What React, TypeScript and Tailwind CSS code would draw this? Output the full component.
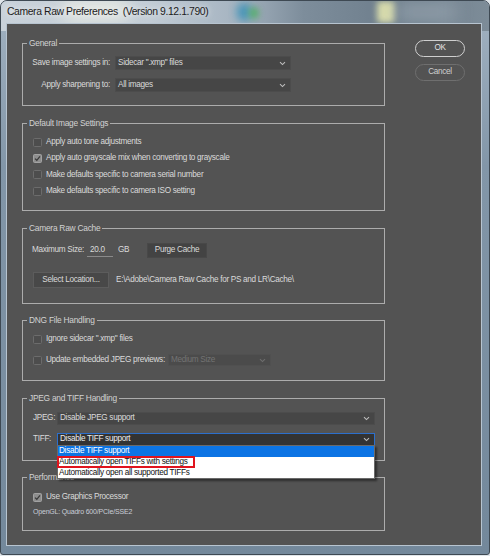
import React from "react";

function Chevron({ dim = false }: { dim?: boolean }) {
  return (
    <svg width="7" height="5" viewBox="0 0 7 5" className="shrink-0">
      <path
        d="M1 1.2 L3.5 3.6 L6 1.2"
        fill="none"
        strokeWidth="1.1"
        className={dim ? "stroke-[#6e6e6e]" : "stroke-[#bdbdbd]"}
      />
    </svg>
  );
}

function Box({ checked = false }: { checked?: boolean }) {
  return checked ? (
    <span className="w-[9px] h-[9px] shrink-0 rounded-[1.5px] border border-[#a2a2a2] bg-[#8e8e8e] flex items-center justify-center">
      <svg width="7" height="7" viewBox="0 0 7 7">
        <path d="M1 3.6 L2.8 5.3 L6 1.4" fill="none" stroke="#3a3a3a" strokeWidth="1.3" />
      </svg>
    </span>
  ) : (
    <span className="w-[9px] h-[9px] shrink-0 rounded-[1.5px] border border-[#6c6c6c] bg-[#4d4d4d]" />
  );
}

function Group({
  title,
  className,
  children,
}: {
  title: string;
  className: string;
  children?: React.ReactNode;
}) {
  return (
    <div className={"relative border border-[#acacac] " + className}>
      <span className="absolute top-[-7.5px] left-[4px] px-[2px] h-[12px] leading-[12px] bg-[#535353] text-[#d2d2d2] text-[8.4px] tracking-[-0.25px]">
        {title}
      </span>
      {children}
    </div>
  );
}

export default function App() {
  return (
    <div className="w-[490px] h-[556px] relative overflow-hidden bg-[#dfe5ea] font-['Liberation_Sans',Arial,sans-serif] whitespace-nowrap">
      <div className="relative w-[490px] h-[555px] flex flex-col rounded-t-[7px] rounded-b-[3px] border border-[#3e4953] bg-[linear-gradient(180deg,#a3b3c2_0%,#8296a8_30%,#73889b_100%)] pl-[5px] pr-[7px] pb-[8px] overflow-hidden">
        {/* aero glass title area */}
        <div className="absolute inset-x-0 top-0 h-[30px] bg-[linear-gradient(90deg,#c9d2da_0%,#c3cdd6_30%,#a6b4c1_48%,#7d8d9b_62%,#6e7e8c_80%,#7d8c98_100%)]" />
        <div className="absolute left-[60px] top-[-4px] w-[70px] h-[26px] rounded-full bg-[#eef0e6] opacity-70 blur-[8px]" />
        <div className="absolute left-[236px] top-[2px] w-[14px] h-[18px] rounded-full bg-[#2f8fb8] opacity-80 blur-[4px]" />
        <div className="absolute left-[248px] top-[6px] w-[10px] h-[12px] rounded-full bg-[#4fb060] opacity-80 blur-[3px]" />
        <div className="absolute left-[376px] top-[0px] w-[18px] h-[22px] rounded-[4px] bg-[#e4e6b0] opacity-90 blur-[3px]" />
        <div className="absolute left-[395px] top-[0px] w-[60px] h-[22px] bg-[#9aa7b2] opacity-60 blur-[8px]" />

        <div className="relative h-[22px] flex items-center pl-[1px] text-[10.4px] tracking-[-0.4px] text-[#1c1c1c] whitespace-pre text-shadow-[0_0_6px_#ffffff]">
          {"Camera Raw Preferences  (Version 9.12.1.790)"}
        </div>

        <div className="relative flex-1 border border-[#b7c4d0] bg-[#535353] flex text-[#dadada] text-[8.2px] tracking-[-0.3px]">
          {/* left column */}
          <div className="ml-[15px] mt-[19px] w-[363px] flex flex-col">
            <Group title="General" className="h-[63px]">
              <div className="pt-[12px] flex flex-col gap-[8px]">
                <div className="flex items-center h-[14px]">
                  <span className="w-[87px] text-right">Save image settings in:</span>
                  <div className="ml-[5px] w-[176px] h-[14px] bg-[#464646] border border-[#4c4c4c] flex items-center justify-between pl-[2px] pr-[4px]">
                    <span>Sidecar ".xmp" files</span>
                    <Chevron />
                  </div>
                </div>
                <div className="flex items-center h-[14px]">
                  <span className="w-[87px] text-right">Apply sharpening to:</span>
                  <div className="ml-[5px] w-[176px] h-[14px] bg-[#464646] border border-[#4c4c4c] flex items-center justify-between pl-[2px] pr-[4px]">
                    <span>All images</span>
                    <Chevron />
                  </div>
                </div>
              </div>
            </Group>

            <Group title="Default Image Settings" className="mt-[17px] h-[88px]">
              <div className="pt-[10px] pl-[10px] flex flex-col">
                <div className="h-[16.33px] flex items-center gap-[4px]">
                  <Box />
                  <span>Apply auto tone adjustments</span>
                </div>
                <div className="h-[16.33px] flex items-center gap-[4px]">
                  <Box checked />
                  <span>Apply auto grayscale mix when converting to grayscale</span>
                </div>
                <div className="h-[16.33px] flex items-center gap-[4px]">
                  <Box />
                  <span>Make defaults specific to camera serial number</span>
                </div>
                <div className="h-[16.33px] flex items-center gap-[4px]">
                  <Box />
                  <span>Make defaults specific to camera ISO setting</span>
                </div>
              </div>
            </Group>

            <Group title="Camera Raw Cache" className="mt-[17px] h-[76px]">
              <div className="pt-[14px] pl-[9px] flex flex-col">
                <div className="h-[15px] flex items-center">
                  <span className="w-[55px]">Maximum Size:</span>
                  <span className="w-[26px] h-[13px] border-b border-[#8a8a8a] pl-[3px] leading-[12px]">20.0</span>
                  <span className="ml-[5px] w-[29px]">GB</span>
                  <div className="w-[60px] h-[15px] bg-[#434343] border border-[#484848] flex items-center justify-center">
                    Purge Cache
                  </div>
                </div>
                <div className="mt-[14px] h-[16px] flex items-center">
                  <div className="ml-[1px] w-[76px] h-[16px] bg-[#484848] border border-[#5c5c5c] flex items-center justify-center">
                    Select Location...
                  </div>
                  <span className="ml-[7px]">{"E:\\Adobe\\Camera Raw Cache for PS and LR\\Cache\\"}</span>
                </div>
              </div>
            </Group>

            <Group title="DNG File Handling" className="mt-[16px] h-[61px]">
              <div className="pt-[10px] pl-[10px] flex flex-col gap-[5px]">
                <div className="h-[16px] flex items-center gap-[4px]">
                  <Box />
                  <span>Ignore sidecar ".xmp" files</span>
                </div>
                <div className="h-[16px] flex items-center gap-[4px]">
                  <Box />
                  <span className="w-[118px]">Update embedded JPEG previews:</span>
                  <div className="w-[103px] h-[12px] bg-[#4b4b4b] border border-[#505050] flex items-center justify-between pl-[2px] pr-[4px] text-[#737373]">
                    <span>Medium Size</span>
                    <Chevron dim />
                  </div>
                </div>
              </div>
            </Group>

            <Group title="JPEG and TIFF Handling" className="mt-[17px] h-[63px] z-10">
              <div className="pt-[13px] pl-[10px] flex flex-col gap-[8px]">
                <div className="h-[13px] flex items-center">
                  <span className="w-[24px]">JPEG:</span>
                  <div className="w-[318px] h-[13px] bg-[#464646] border border-[#4c4c4c] flex items-center justify-between pl-[2px] pr-[4px]">
                    <span>Disable JPEG support</span>
                    <Chevron />
                  </div>
                </div>
                <div className="h-[13px] flex items-center">
                  <span className="w-[24px]">TIFF:</span>
                  <div className="relative w-[318px] h-[13px] bg-[#333333] border border-[#2c6fcc] flex items-center justify-between pl-[2px] pr-[4px] text-[#ececec]">
                    <span>Disable TIFF support</span>
                    <Chevron />
                    <div className="absolute left-[-1px] top-full w-[318px] h-[34px] bg-white border border-[#6a6a6a] shadow-[2px_2px_2px_rgba(0,0,0,0.45)] flex flex-col text-[#111111] leading-[10px]">
                      <div className="h-[11px] bg-[#0c74e4] text-white flex items-center pl-[1px]">
                        Disable TIFF support
                      </div>
                      <div className="h-[11px] w-[136px] flex items-center pl-[1px] outline-2 outline-[#e0141e] -outline-offset-1">
                        Automatically open TIFFs with settings
                      </div>
                      <div className="h-[11px] flex items-center pl-[1px]">
                        Automatically open all supported TIFFs
                      </div>
                    </div>
                  </div>
                </div>
              </div>
            </Group>

            <Group title="Performance" className="mt-[16px] h-[54px]">
              <div className="pt-[11px] pl-[10px] flex flex-col">
                <div className="h-[16px] flex items-center gap-[4px]">
                  <Box checked />
                  <span>Use Graphics Processor</span>
                </div>
                <div className="h-[14px] flex items-center text-[7px] tracking-[-0.2px] text-[#c9cdd6]">
                  OpenGL: Quadro 600/PCIe/SSE2
                </div>
              </div>
            </Group>
          </div>

          {/* right column */}
          <div className="ml-[30px] mt-[16px] flex flex-col gap-[7px]">
            <div className="w-[50px] h-[17px] rounded-full border border-[#cfcfcf] flex items-center justify-center text-[#e2e2e2]">
              OK
            </div>
            <div className="w-[50px] h-[17px] rounded-full border border-[#6f6f6f] flex items-center justify-center text-[#cfcfcf]">
              Cancel
            </div>
          </div>
        </div>
      </div>
    </div>
  );
}
